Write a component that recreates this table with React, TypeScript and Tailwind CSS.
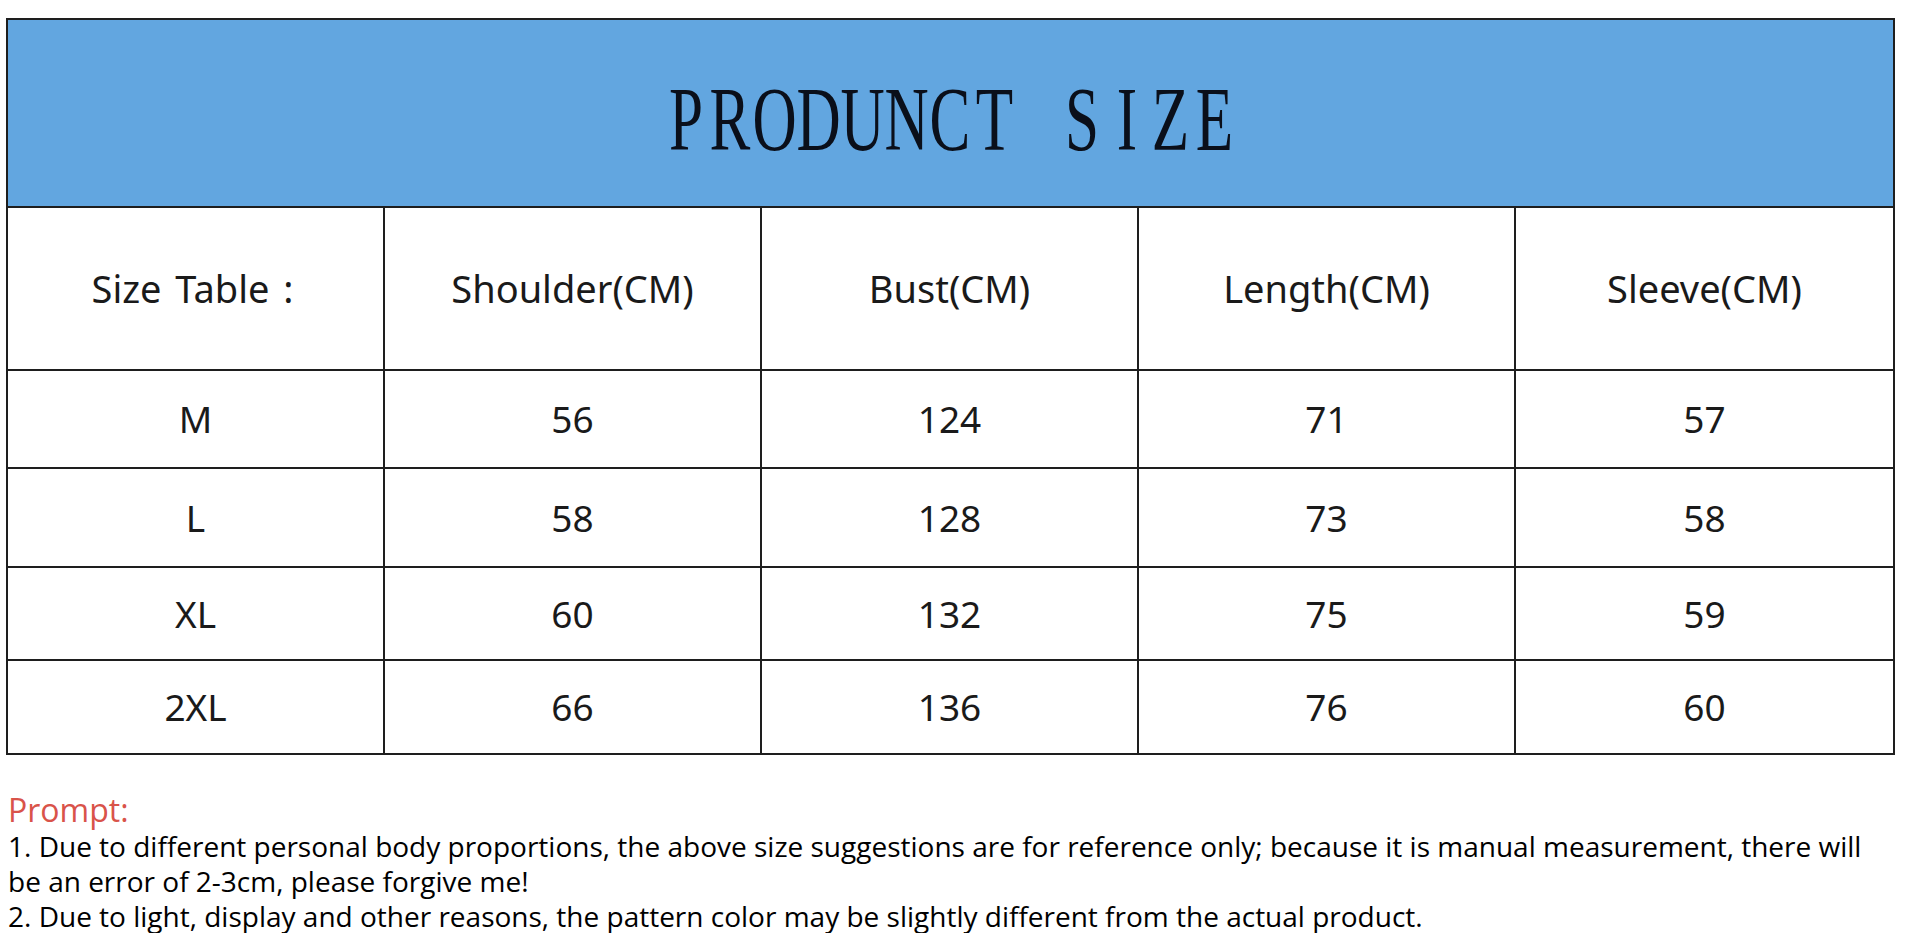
import React from "react";

const headers = ["Size Table :", "Shoulder(CM)", "Bust(CM)", "Length(CM)", "Sleeve(CM)"];
const rows: { h: string; cells: string[] }[] = [
  { h: "h-[98px]", cells: ["M", "56", "124", "71", "57"] },
  { h: "h-[99px]", cells: ["L", "58", "128", "73", "58"] },
  { h: "h-[93px]", cells: ["XL", "60", "132", "75", "59"] },
  { h: "h-[92px]", cells: ["2XL", "66", "136", "76", "60"] },
];

const title = "PRODUNCT SIZE".split("");

export default function App() {
  return (
    <div className="w-[1924px] h-[933px] bg-white overflow-hidden">
      <div className="ml-[6px] mt-[18px] w-[1889px] border-2 border-[#1e1e1e]">
        <div className="h-[188px] bg-[#62a6e0] border-b-2 border-[#1e1e1e] flex items-center justify-center pt-[13px]">
          <div className="flex font-['Liberation_Serif',serif] text-[90px] leading-none text-[#0a0f1a]">
            {title.map((c, i) => (
              <span key={i} className="w-[44px] flex justify-center">
                <span className="inline-block scale-x-[0.68]">{c === " " ? "\u00a0" : c}</span>
              </span>
            ))}
          </div>
        </div>
        <div className="grid grid-cols-5 h-[163px] border-b-2 border-[#1e1e1e] font-['Noto_Sans',sans-serif] text-[38px] text-[#1a1a1a]">
          {headers.map((t, i) => (
            <div
              key={i}
              className={`flex items-center justify-center whitespace-pre ${i === 0 ? "[word-spacing:4px] pr-[6px]" : ""} ${i < 4 ? "border-r-2 border-[#1e1e1e]" : ""}`}
            >
              {t}
            </div>
          ))}
        </div>
        {rows.map((r, ri) => (
          <div
            key={ri}
            className={`grid grid-cols-5 ${r.h} ${ri < rows.length - 1 ? "border-b-2 border-[#1e1e1e]" : ""} font-['Noto_Sans',sans-serif] text-[37px] text-[#1a1a1a]`}
          >
            {r.cells.map((c, ci) => (
              <div key={ci} className={`flex items-center justify-center ${ci < 4 ? "border-r-2 border-[#1e1e1e]" : ""}`}>
                {c}
              </div>
            ))}
          </div>
        ))}
      </div>
      <div className="ml-[8px] mt-[36px] font-['Open_Sans',sans-serif] text-black whitespace-nowrap">
        <div className="text-[32px] leading-[38px] text-[#d9534a]">Prompt:</div>
        <div className="text-[28px] leading-[35px]">
          1. Due to different personal body proportions, the above size suggestions are for reference only; because it is manual measurement, there will
        </div>
        <div className="text-[28px] leading-[35px]">be an error of 2-3cm, please forgive me!</div>
        <div className="text-[28px] leading-[35px]">
          2. Due to light, display and other reasons, the pattern color may be slightly different from the actual product.
        </div>
      </div>
    </div>
  );
}
